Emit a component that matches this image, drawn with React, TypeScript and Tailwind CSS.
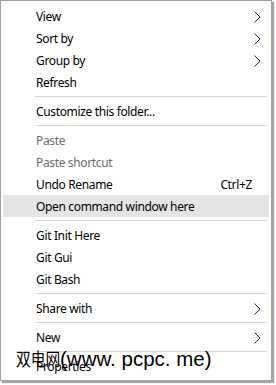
import React from "react";

type Item =
  | { type: "item"; label: string; disabled?: boolean; shortcut?: string; sub?: boolean; hot?: boolean }
  | { type: "sep" };

const items: Item[] = [
  { type: "item", label: "View", sub: true },
  { type: "item", label: "Sort by", sub: true },
  { type: "item", label: "Group by", sub: true },
  { type: "item", label: "Refresh" },
  { type: "sep" },
  { type: "item", label: "Customize this folder..." },
  { type: "sep" },
  { type: "item", label: "Paste", disabled: true },
  { type: "item", label: "Paste shortcut", disabled: true },
  { type: "item", label: "Undo Rename", shortcut: "Ctrl+Z" },
  { type: "item", label: "Open command window here", hot: true },
  { type: "sep" },
  { type: "item", label: "Git Init Here" },
  { type: "item", label: "Git Gui" },
  { type: "item", label: "Git Bash" },
  { type: "sep" },
  { type: "item", label: "Share with", sub: true },
  { type: "sep" },
  { type: "item", label: "New", sub: true },
  { type: "sep" },
  { type: "item", label: "Properties" },
];

function Chevron() {
  return (
    <svg width="7" height="12" viewBox="0 0 7 12" className="block">
      <path d="M0.5 0.5 L6 6 L0.5 11.5" fill="none" stroke="#35225f" strokeWidth="1" />
    </svg>
  );
}

export default function App() {
  return (
    <div className="relative w-[276px] h-[385px] bg-white overflow-hidden" style={{ fontFamily: '"Noto Sans", "Open Sans", sans-serif' }}>
      <div className="w-[272px] h-[381px] border border-[#a0a0a0] bg-white px-[2px] pt-[4px] pb-[3px] shadow-[2px_2px_1px_rgba(0,0,0,0.35)]">
        {items.map((it, i) =>
          it.type === "sep" ? (
            <div key={i} className="h-[7px] flex items-center">
              <div className="h-px ml-[32px] mr-[2px] flex-1 bg-[#d7d7d7]" />
            </div>
          ) : (
            <div
              key={i}
              className={`h-[22px] flex items-center pl-[33px] pr-[8px] pt-px text-[12px] leading-[21px] tracking-[-0.35px] ${
                it.hot ? "bg-[#e5e5e5]" : ""
              } ${it.disabled ? "text-[#6d6d6d]" : "text-black"}`}
            >
              <span className="flex-1 whitespace-nowrap">{it.label}</span>
              {it.shortcut && <span className="mr-[9px] whitespace-nowrap">{it.shortcut}</span>}
              {it.sub && <Chevron />}
            </div>
          )
        )}
      </div>
      <div className="absolute left-[16px] top-[349px] flex items-baseline text-black whitespace-nowrap leading-none">
        <span className="inline-block w-[44px] overflow-visible">
          <span
            className="inline-block text-[18px] leading-none origin-left scale-x-[0.82]"
            style={{ fontFamily: '"Noto Sans CJK SC", sans-serif' }}
          >
            双电网
          </span>
        </span>
        <span className="text-[20.5px] leading-none" style={{ fontFamily: '"Liberation Sans", sans-serif' }}>
          (www. pcpc. me)
        </span>
      </div>
    </div>
  );
}
